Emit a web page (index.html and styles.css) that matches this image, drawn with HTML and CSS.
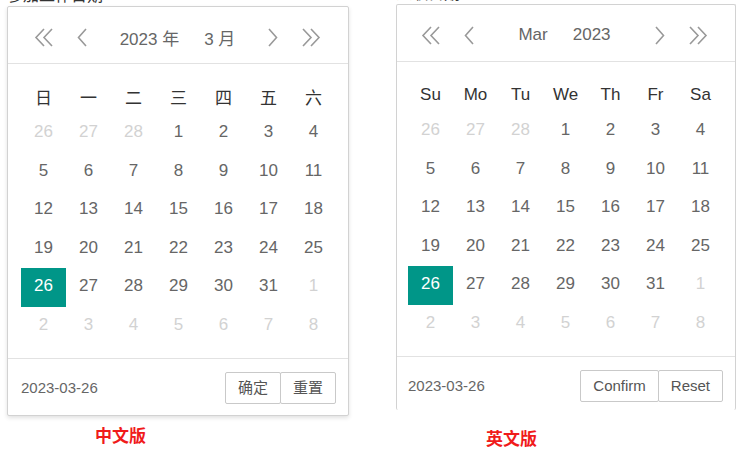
FILE: index.html
```html
<!DOCTYPE html>
<html lang="zh-CN">
<head>
    <meta charset="UTF-8">
    <meta name="viewport" content="width=device-width, initial-scale=1.0">
    <title>日期选择</title>
    <link rel="stylesheet" href="styles.css">
</head>
<body>
    <div class="page">
        <!-- 中文版 -->
        <div class="column column-cn">
            <div class="caption">参加工作日期</div>
            <div class="panel panel-cn">
                <div class="panel-head">
                    <span class="nav">
                        <svg class="icon-dbl" viewBox="0 0 21 19"><path d="M10 1 L2 9.5 L10 18 M18 1 L10 9.5 L18 18"/></svg>
                        <svg class="icon-one" viewBox="0 0 10 19"><path d="M9 1 L1.5 9.5 L9 18"/></svg>
                    </span>
                    <span class="title"><span>2023 年</span><span>3 月</span></span>
                    <span class="nav">
                        <svg class="icon-one" viewBox="0 0 10 19"><path d="M1 1 L8.5 9.5 L1 18"/></svg>
                        <svg class="icon-dbl" viewBox="0 0 21 19"><path d="M3 1 L11 9.5 L3 18 M11 1 L19 9.5 L11 18"/></svg>
                    </span>
                </div>
                <div class="panel-body">
                    <div class="grid">
                        <span class="week">日</span><span class="week">一</span><span class="week">二</span><span class="week">三</span><span class="week">四</span><span class="week">五</span><span class="week">六</span>
                        <span class="day other">26</span><span class="day other">27</span><span class="day other">28</span><span class="day">1</span><span class="day">2</span><span class="day">3</span><span class="day">4</span>
                        <span class="day">5</span><span class="day">6</span><span class="day">7</span><span class="day">8</span><span class="day">9</span><span class="day">10</span><span class="day">11</span>
                        <span class="day">12</span><span class="day">13</span><span class="day">14</span><span class="day">15</span><span class="day">16</span><span class="day">17</span><span class="day">18</span>
                        <span class="day">19</span><span class="day">20</span><span class="day">21</span><span class="day">22</span><span class="day">23</span><span class="day">24</span><span class="day">25</span>
                        <span class="day selected">26</span><span class="day">27</span><span class="day">28</span><span class="day">29</span><span class="day">30</span><span class="day">31</span><span class="day other">1</span>
                        <span class="day other">2</span><span class="day other">3</span><span class="day other">4</span><span class="day other">5</span><span class="day other">6</span><span class="day other">7</span><span class="day other">8</span>
                    </div>
                </div>
                <div class="panel-foot">
                    <span class="value">2023-03-26</span>
                    <span class="btns"><span class="btn">确定</span><span class="btn">重置</span></span>
                </div>
            </div>
            <div class="label">中文版</div>
        </div>

        <!-- 英文版 -->
        <div class="column column-en">
            <div class="caption">入职日期</div>
            <div class="panel panel-en">
                <div class="panel-head">
                    <span class="nav">
                        <svg class="icon-dbl" viewBox="0 0 21 19"><path d="M10 1 L2 9.5 L10 18 M18 1 L10 9.5 L18 18"/></svg>
                        <svg class="icon-one" viewBox="0 0 10 19"><path d="M9 1 L1.5 9.5 L9 18"/></svg>
                    </span>
                    <span class="title"><span>Mar</span><span>2023</span></span>
                    <span class="nav">
                        <svg class="icon-one" viewBox="0 0 10 19"><path d="M1 1 L8.5 9.5 L1 18"/></svg>
                        <svg class="icon-dbl" viewBox="0 0 21 19"><path d="M3 1 L11 9.5 L3 18 M11 1 L19 9.5 L11 18"/></svg>
                    </span>
                </div>
                <div class="panel-body">
                    <div class="grid">
                        <span class="week">Su</span><span class="week">Mo</span><span class="week">Tu</span><span class="week">We</span><span class="week">Th</span><span class="week">Fr</span><span class="week">Sa</span>
                        <span class="day other">26</span><span class="day other">27</span><span class="day other">28</span><span class="day">1</span><span class="day">2</span><span class="day">3</span><span class="day">4</span>
                        <span class="day">5</span><span class="day">6</span><span class="day">7</span><span class="day">8</span><span class="day">9</span><span class="day">10</span><span class="day">11</span>
                        <span class="day">12</span><span class="day">13</span><span class="day">14</span><span class="day">15</span><span class="day">16</span><span class="day">17</span><span class="day">18</span>
                        <span class="day">19</span><span class="day">20</span><span class="day">21</span><span class="day">22</span><span class="day">23</span><span class="day">24</span><span class="day">25</span>
                        <span class="day selected">26</span><span class="day">27</span><span class="day">28</span><span class="day">29</span><span class="day">30</span><span class="day">31</span><span class="day other">1</span>
                        <span class="day other">2</span><span class="day other">3</span><span class="day other">4</span><span class="day other">5</span><span class="day other">6</span><span class="day other">7</span><span class="day other">8</span>
                    </div>
                </div>
                <div class="panel-foot">
                    <span class="value">2023-03-26</span>
                    <span class="btns"><span class="btn">Confirm</span><span class="btn">Reset</span></span>
                </div>
            </div>
            <div class="label">英文版</div>
        </div>
    </div>
</body>
</html>
```

FILE: styles.css
```css
/* 日期面板 */
body {
    margin: 0;
    background-color: #fff;
    font-family: "Liberation Sans", Arial, "Noto Sans CJK SC", sans-serif;
    color: #666;
    overflow: hidden;
}
.page {
    display: flex;
    align-items: flex-start;
}
.column {
    display: flex;
    flex-direction: column;
}
.column-cn {
    margin-left: 7px;
}
.column-en {
    margin-left: 47px;
}
.caption {
    font-size: 16px;
    line-height: 18px;
    height: 18px;
    color: #333;
    white-space: nowrap;
}
.column-cn .caption {
    margin-top: -13px;
}
.column-en .caption {
    margin-top: -15px;
}
.panel {
    margin-top: 1px;
    background-color: #fff;
    border: 1px solid #d2d2d2;
    border-radius: 2px;
    box-sizing: border-box;
}
.panel-cn {
    width: 342px;
    padding: 0 12px 0 13px;
    box-shadow: 0 2px 4px rgba(0, 0, 0, 0.12);
}
.panel-en {
    width: 340px;
    padding: 0 12px 0 11px;
    border-bottom: none;
    height: 406px;
    overflow: hidden;
}
.panel-head {
    display: flex;
    align-items: center;
    height: 57px;
    padding: 4px 15px 0 13px;
    margin: 0 -12px 0 -13px;
    box-sizing: border-box;
    border-bottom: 1px solid #e2e2e2;
}
.panel-en .panel-head {
    margin: 0 -12px 0 -11px;
    padding: 4px 27px 0 24px;
}
.panel-cn .panel-head {
    padding: 4px 27px 0 26px;
}
.nav {
    display: flex;
    align-items: center;
    gap: 22px;
}
.nav svg {
    height: 19px;
    fill: none;
    stroke: #999;
    stroke-width: 1.6;
}
.icon-dbl {
    width: 21px;
}
.icon-one {
    width: 10px;
}
.title {
    flex: 1;
    display: flex;
    justify-content: center;
    gap: 25px;
    font-size: 17px;
    color: #666;
}
.panel-body {
    padding: 15px 0 13px 0;
}
.grid {
    display: grid;
    grid-template-columns: repeat(7, 45px);
    grid-template-rows: 35px repeat(6, 38.5px);
}
.week,
.day {
    display: flex;
    align-items: center;
    justify-content: center;
    font-size: 17px;
}
.week {
    color: #333;
}
.day {
    color: #666;
    padding-bottom: 2px;
    box-sizing: border-box;
}
.day.other {
    color: #d2d2d2;
}
.day.selected {
    background-color: #009688;
    color: #fff;
}
.panel-foot {
    display: flex;
    align-items: center;
    justify-content: space-between;
    height: 57px;
    margin: 0 -12px 0 -13px;
    padding: 1px 12px 0 13px;
    box-sizing: border-box;
    border-top: 1px solid #e2e2e2;
}
.panel-en .panel-foot {
    margin: 0 -12px 0 -11px;
    padding: 1px 12px 0 11px;
}
.value {
    font-size: 15px;
    color: #666;
}
.btns {
    display: flex;
}
.btn {
    height: 32px;
    line-height: 30px;
    padding: 0 12px;
    border: 1px solid #c9c9c9;
    border-radius: 2px;
    box-sizing: border-box;
    font-size: 15px;
    color: #555;
    background-color: #fff;
}
.btn + .btn {
    margin-left: -1px;
}
.label {
    font-size: 17px;
    line-height: 20px;
    font-weight: bold;
    color: #f01b1b;
    font-family: "Noto Sans CJK SC", sans-serif;
}
.column-cn .label {
    margin: 9px 0 0 88px;
}
.column-en .label {
    margin: 18px 0 0 90px;
}
```
